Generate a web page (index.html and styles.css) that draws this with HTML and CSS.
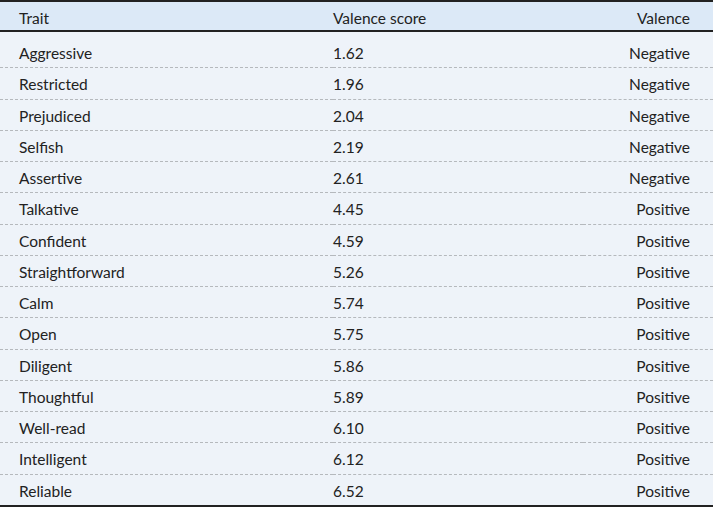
FILE: index.html
```html
<!DOCTYPE html>
<html>
<head>
<meta charset="utf-8">
<link rel="stylesheet" href="styles.css">
</head>
<body>
<table class="tbl">
<thead>
<tr><th class="c1">Trait</th><th class="c2">Valence score</th><th class="c3">Valence</th></tr>
</thead>
<tbody>
<tr class="first"><td class="c1">Aggressive</td><td class="c2">1.62</td><td class="c3">Negative</td></tr>
<tr><td class="c1">Restricted</td><td class="c2">1.96</td><td class="c3">Negative</td></tr>
<tr><td class="c1">Prejudiced</td><td class="c2">2.04</td><td class="c3">Negative</td></tr>
<tr><td class="c1">Selfish</td><td class="c2">2.19</td><td class="c3">Negative</td></tr>
<tr><td class="c1">Assertive</td><td class="c2">2.61</td><td class="c3">Negative</td></tr>
<tr><td class="c1">Talkative</td><td class="c2">4.45</td><td class="c3">Positive</td></tr>
<tr><td class="c1">Confident</td><td class="c2">4.59</td><td class="c3">Positive</td></tr>
<tr><td class="c1">Straightforward</td><td class="c2">5.26</td><td class="c3">Positive</td></tr>
<tr><td class="c1">Calm</td><td class="c2">5.74</td><td class="c3">Positive</td></tr>
<tr><td class="c1">Open</td><td class="c2">5.75</td><td class="c3">Positive</td></tr>
<tr><td class="c1">Diligent</td><td class="c2">5.86</td><td class="c3">Positive</td></tr>
<tr><td class="c1">Thoughtful</td><td class="c2">5.89</td><td class="c3">Positive</td></tr>
<tr><td class="c1">Well-read</td><td class="c2">6.10</td><td class="c3">Positive</td></tr>
<tr><td class="c1">Intelligent</td><td class="c2">6.12</td><td class="c3">Positive</td></tr>
<tr class="last"><td class="c1">Reliable</td><td class="c2">6.52</td><td class="c3">Positive</td></tr>
</tbody>
</table>
</body>
</html>
```
FILE: styles.css
```css
html, body {
  margin: 0;
  padding: 0;
  background: #ffffff;
}
.tbl {
  width: 713px;
  border-collapse: collapse;
  font-family: "Lato", "Liberation Sans", sans-serif;
  font-size: 15.5px;
  color: #222222;
  background: #eef3f9;
  border-top: 2px solid #222;
  border-bottom: 2px solid #222;
}
.tbl thead tr {
  background: #dce9f7;
  border-bottom: 2px solid #222;
}
.tbl th {
  font-weight: normal;
  padding: 5px 0 0 0;
  line-height: 23px;
  text-align: left;
}
.tbl td {
  padding: 2px 0 0 0;
  line-height: 28.25px;
}
.tbl tbody tr {
  border-bottom: 1px dashed #b5b9bd;
}
.tbl tbody tr.first td {
  padding-top: 7px;
  padding-bottom: 0;
}
.tbl tbody tr.last {
  border-bottom: none;
}
.tbl .c1 {
  padding-left: 19px;
  width: 314px;
}
.tbl .c2 {
  width: 250px;
}
.tbl .c3 {
  text-align: right;
  padding-right: 23px;
}
```
